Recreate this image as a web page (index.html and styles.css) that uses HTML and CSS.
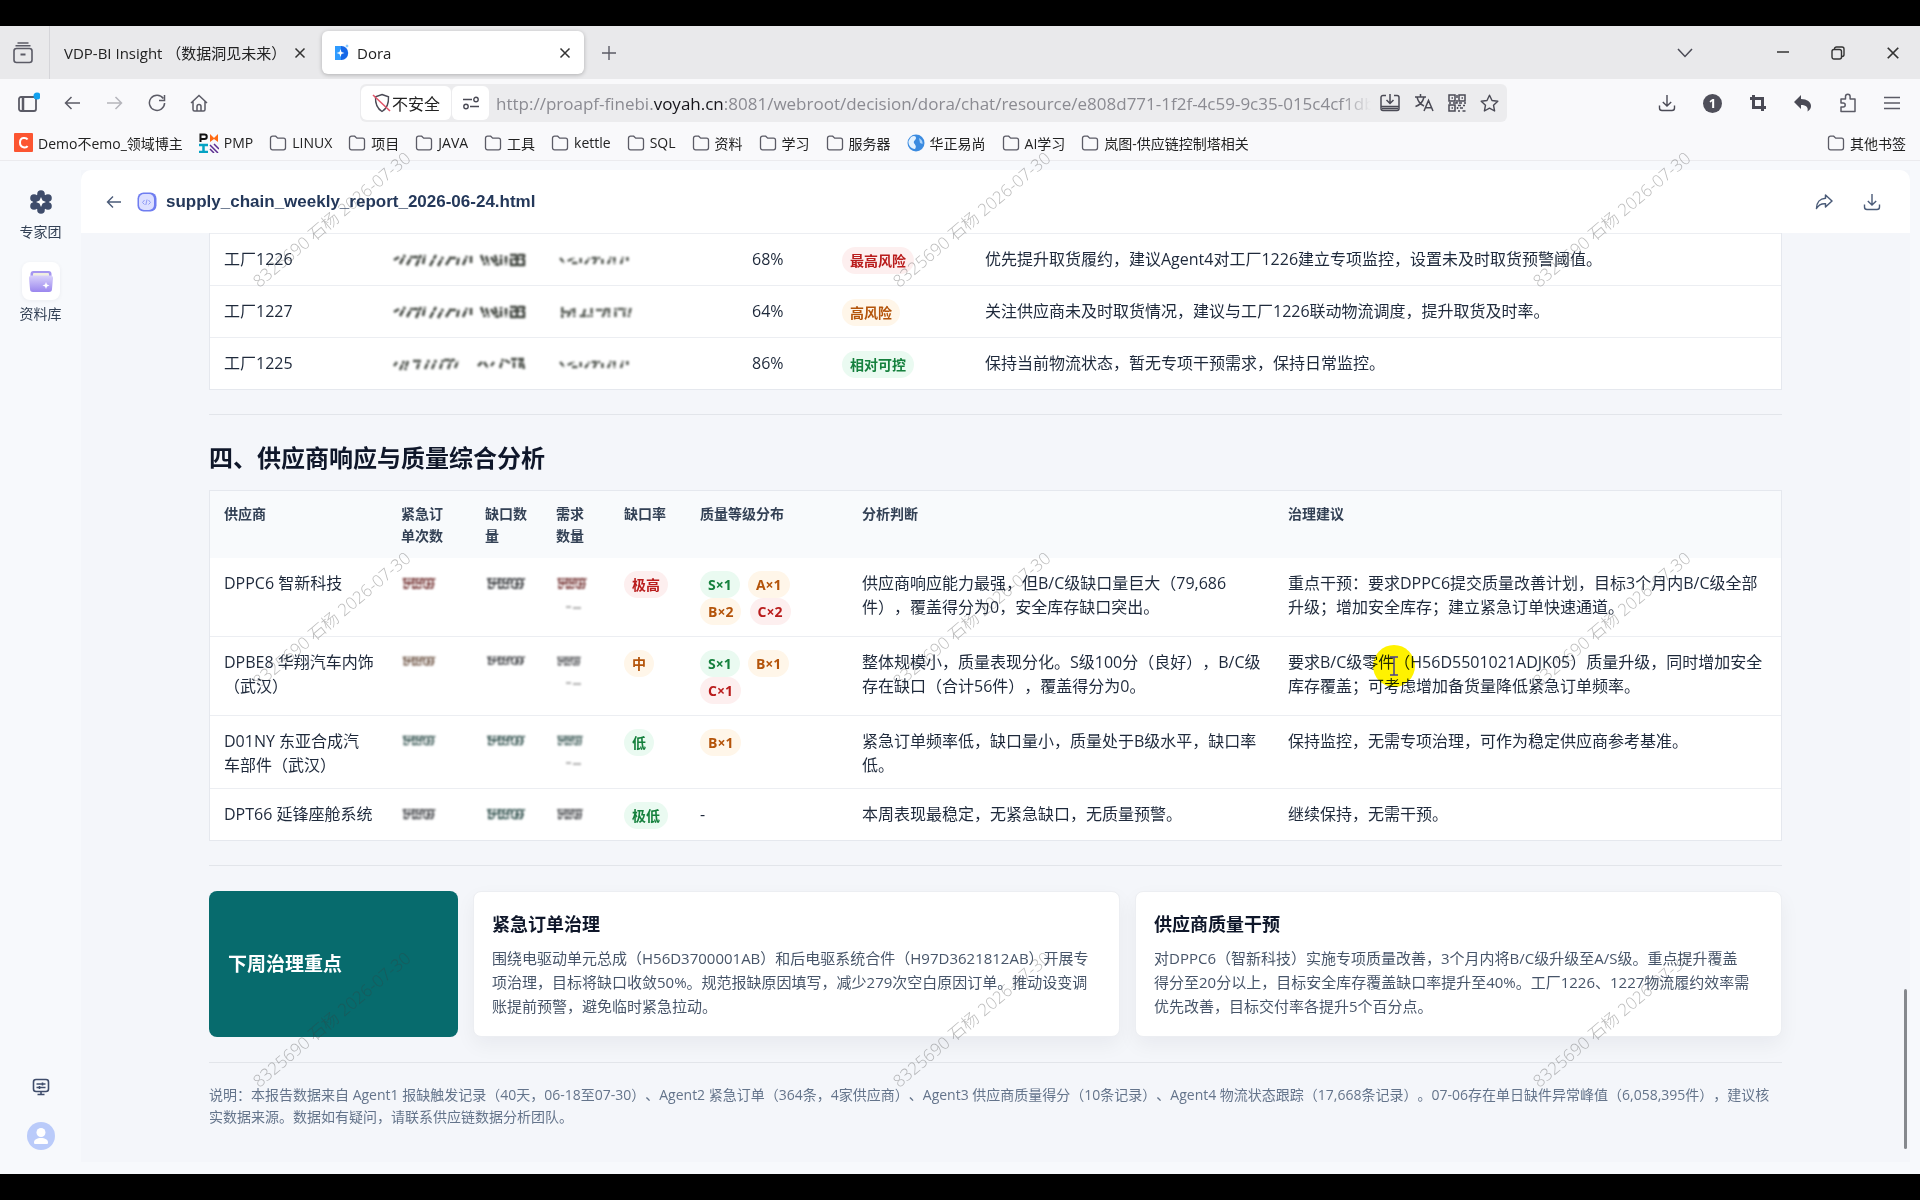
FILE: index.html
```html
<!DOCTYPE html>
<html lang="zh-CN">
<head>
    <meta charset="UTF-8">
    <title>Dora</title>
    <link rel="stylesheet" href="styles.css">
</head>
<body>
<!-- 公用图标 -->
<svg class="defs" width="0" height="0">
    <symbol id="folder" viewBox="0 0 18 18"><path d="M1.5 4.2a2 2 0 0 1 2-2h3.2l2 2h5.8a2 2 0 0 1 2 2v7.6a2 2 0 0 1-2 2h-11a2 2 0 0 1-2-2z" fill="none" stroke="#5b5b66" stroke-width="1.3"/></symbol>
    <symbol id="close" viewBox="0 0 12 12"><path d="M1.5 1.5l9 9M10.5 1.5l-9 9" fill="none" stroke="#333" stroke-width="1.5"/></symbol>
    <symbol id="down" viewBox="0 0 18 18"><path d="M9 1v11M4.800 8L9 12l4.200-4M1.500 11.500v2.500a2.500 2.500 0 0 0 2.500 2.500h10a2.500 2.500 0 0 0 2.500-2.500v-2.500" fill="none" stroke="currentColor" stroke-width="1.4"/></symbol>
    <symbol id="smear-a" viewBox="0 0 136 16" preserveAspectRatio="none"><path d="M1 8l5-3M7 12l5-9M14 13l5-9M20 5h5M23 14l5-11M30 12l2-9M37 14l6-11M45 14l5-9M53 13l5-8M56 6h7M64 13l2-8M70 13l4-9M78 4v8M88 3l4 10M93 4l3 9M98 5l5 8M102 3l3 11M108 13V3M113 4v9M117 3h14M120 7h11M118 13V6M124 14V3M131 14V2M117 13h15" fill="none" stroke="#40453f" stroke-width="2.600" stroke-dasharray="7 1"/></symbol>
    <symbol id="smear-b" viewBox="0 0 136 16" preserveAspectRatio="none"><path d="M1 10l3-4M7 14l4-9M15 5l-3 9M20 5h8M24 13l3-9M32 13l4-9M39 13l4-9M47 13l3-9M51 4h11M55 13l3-8M62 12l3-7M85 10l4-4M91 6l4 6M98 10l3-4M107 12l3-9M112 4l5 3M118 3h14M121 12V3M127 12V3M131 13l-2-9" fill="none" stroke="#4c514b" stroke-width="2.600" stroke-dasharray="6 1"/></symbol>
    <symbol id="smear-c" viewBox="0 0 70 16" preserveAspectRatio="none"><path d="M1 6l4 5M8 9l6-3M12 11h5M20 6v6M24 12l4-6M30 6h8M32 12l3-6M40 12V6M45 12l3-7M51 5v7M57 12l2-7M63 5v4" fill="none" stroke="#555a54" stroke-width="2.400" stroke-dasharray="5 1"/></symbol>
    <symbol id="smear-d" viewBox="0 0 70 16" preserveAspectRatio="none"><path d="M3 3v11M3 8h8M8 13l4-8M14 4v9M19 12h9M24 5l-2 8M30 4v9M34 6h9M40 13l4-9M46 4v9M52 13V4M54 5h8M60 13V5M66 4l-2 9" fill="none" stroke="#5a5f59" stroke-width="2.400" stroke-dasharray="6 1"/></symbol>
    <symbol id="blot" viewBox="0 0 42 16" preserveAspectRatio="none"><path d="M2 3h38M4 7h12M19 7h8M30 8h9M3 12h6M13 12h11M28 12h10M4 3v9M9 5v7M14 3v10M18 3v10M23 4v8M27 3v10M32 3v9M37 3v10" fill="none" stroke="currentColor" stroke-width="1.900" stroke-dasharray="5 1 3 1"/></symbol>
    <symbol id="trail" viewBox="0 0 20 6"><path d="M2 3h5M9 4h8" fill="none" stroke="#999" stroke-width="1.5"/></symbol>
</svg>

<div class="browser">
    <div class="tabs">
        <button class="tab-list" aria-label="标签页列表">
            <svg width="20" height="22" viewBox="0 0 20 22" fill="none" stroke="#5b5b66" stroke-width="1.6"><rect x="1" y="6.500" width="18" height="14" rx="2.500"/><path d="M2.500 3.800h15M4.500 1h11" /><path d="M7.500 12.500h5" stroke-width="2"/></svg>
        </button>
        <div class="tab"><span>VDP-BI Insight （数据洞见未来）</span><button aria-label="关闭"><svg width="12" height="12"><use href="#close"/></svg></button></div>
        <div class="tab active">
            <svg width="15" height="17" viewBox="0 0 15 17"><path d="M1 2h6.500a6.500 6.800 0 0 1 0 14H1z" fill="#1668e8"/><path d="M1 2h6v14H1z" fill="#2f9bff"/><path d="M6.500 5l1 3 3 1-3 1-1 3-1-3-3-1 3-1z" fill="#fff"/><path d="M13 0l.5 1.500 1.500.5-1.500.5-.5 1.500-.5-1.500-1.500-.5 1.500-.5z" fill="#58b4ff"/></svg>
            <span>Dora</span><button aria-label="关闭"><svg width="12" height="12"><use href="#close"/></svg></button>
        </div>
        <button class="new-tab" aria-label="新建标签页"><svg width="16" height="16" viewBox="0 0 16 16"><path d="M8 1v14M1 8h14" stroke="#5b5b66" stroke-width="1.400"/></svg></button>
        <div class="win">
            <button aria-label="列出标签"><svg width="16" height="16" viewBox="0 0 16 16" fill="none" stroke="#4a4a55" stroke-width="1.500"><path d="M1 4l7 7.500L15 4"/></svg></button>
            <button class="min" aria-label="最小化"><svg width="14" height="14" viewBox="0 0 14 14"><path d="M1 6h12" stroke="#333" stroke-width="1.500"/></svg></button>
            <button aria-label="还原"><svg width="14" height="14" viewBox="0 0 14 14" fill="none" stroke="#333" stroke-width="1.400"><rect x="1" y="3.500" width="9.500" height="9.500" rx="2"/><path d="M3.500 3.500V3a2 2 0 0 1 2-2H11a2 2 0 0 1 2 2v5.500a2 2 0 0 1-2 2h-.5"/></svg></button>
            <button aria-label="关闭窗口"><svg width="14" height="14"><use href="#close"/></svg></button>
        </div>
    </div>

    <div class="nav">
        <div class="nav-left">
            <button aria-label="侧栏"><svg width="24" height="22" viewBox="0 0 24 22" fill="none" stroke="#5b5b66" stroke-width="1.800"><rect x="3" y="5" width="17" height="14" rx="2"/><path d="M7 5v14" stroke-width="2.500"/><circle cx="21" cy="4" r="3.500" fill="#12a1ef" stroke="none"/></svg></button>
            <button aria-label="后退"><svg width="18" height="16" viewBox="0 0 18 16" fill="none" stroke="#5b5b66" stroke-width="1.500"><path d="M16 8H1.500M7.500 2L1.500 8l6 6"/></svg></button>
            <button aria-label="前进"><svg width="18" height="16" viewBox="0 0 18 16" fill="none" stroke="#b5b5bb" stroke-width="1.500"><path d="M1 8h14.500M9.500 2l6 6-6 6"/></svg></button>
            <button aria-label="刷新"><svg width="18" height="18" viewBox="0 0 18 18" fill="none" stroke="#5b5b66" stroke-width="1.500"><path d="M15.300 4.500A7.600 7.600 0 1 0 16.600 9M16.500 1v5.500H11"/></svg></button>
            <button aria-label="主页"><svg width="18" height="18" viewBox="0 0 18 18" fill="none" stroke="#5b5b66" stroke-width="1.500"><path d="M1 9l8-7.500L17 9M3 7.500v8A1.500 1.500 0 0 0 4.500 17h9a1.500 1.500 0 0 0 1.500-1.500v-8M7 17v-4.500a2 2 0 0 1 4 0V17"/></svg></button>
        </div>
        <div class="url">
            <span class="chip"><svg width="20" height="20" viewBox="0 0 20 20" fill="none"><path d="M10 1.500l6.500 2.300c.3 6.500-1 11.500-6.500 14.700C4.500 15.300 3.200 10.300 3.500 3.800z" stroke="#4a4a55" stroke-width="1.400"/><path d="M1 2l17 16" stroke="#e2556a" stroke-width="1.600"/></svg>不安全</span>
            <button class="chip perm" aria-label="权限"><svg width="18" height="14" viewBox="0 0 18 14" fill="none" stroke="#4a4a55" stroke-width="1.400"><path d="M1 3.500h9M8 10.500h9"/><circle cx="14" cy="3.500" r="2.200"/><circle cx="4" cy="10.500" r="2.200"/></svg></button>
            <span class="addr">http://proapf-finebi.<b>voyah.cn</b>:8081/webroot/decision/dora/chat/resource/e808d771-1f2f-4c59-9c35-015c4cf1db</span>
            <div class="url-btns">
                <button aria-label="安装"><svg width="20" height="18" viewBox="0 0 20 18" fill="none" stroke="#4a4a55" stroke-width="1.500"><path d="M6 1.500H3a2 2 0 0 0-2 2v11A2 2 0 0 0 3 16.500h14a2 2 0 0 0 2-2v-11a2 2 0 0 0-2-2h-3M10 0v9M6.500 6L10 9.500 13.500 6M1 12.500h18M2 14.500h16"/></svg></button>
                <button aria-label="翻译"><svg width="20" height="18" viewBox="0 0 20 18" fill="none" stroke="#4a4a55" stroke-width="1.500"><path d="M1 3h11M6.500 0v3M3 3c1 4.500 3.500 7.500 7 9M10 3C9 7.500 6 11 1.500 12.500M10 17l4.500-10.500L19 17M11.500 13.800h6"/></svg></button>
                <button aria-label="二维码"><svg width="18" height="18" viewBox="0 0 18 18" fill="none" stroke="#4a4a55" stroke-width="1.500"><rect x="1" y="1" width="6" height="6"/><rect x="11" y="1" width="6" height="6"/><rect x="1" y="11" width="6" height="6"/><path d="M3.500 4h1.500M13.500 4h1.500M3.500 14h1.500M9 1v3M9 6v3H5M1 9h2M11 9h3M16 9h2M10 11.500h3M15 11.500h2M12 14h3M10 17h2M14.500 17h3M9.500 13v2" /></svg></button>
                <button aria-label="收藏"><svg width="19" height="18" viewBox="0 0 19 18" fill="none" stroke="#4a4a55" stroke-width="1.400" stroke-linejoin="round"><path d="M9.500 1.200l2.500 5.300 5.800.7-4.300 4 1.100 5.800-5.100-2.900L4.400 17l1.100-5.800-4.300-4 5.800-.7z"/></svg></button>
            </div>
        </div>
        <div class="nav-right">
            <button aria-label="下载"><svg width="18" height="18"><use href="#down"/></svg></button>
            <button class="count">1</button>
            <button aria-label="截图"><svg width="18" height="18" viewBox="0 0 18 18" fill="none" stroke="#4a4a55" stroke-width="3"><path d="M4.500 1v12.500H17M1 4.500h12.500V17"/></svg></button>
            <button aria-label="撤销"><svg width="18" height="18" viewBox="0 0 18 18" fill="#4a4a55"><path d="M7 1v4c6 0 10 3 10 7 0 2-1 4-3.500 5.500 1-4-1-6.500-6.500-6.500v4L0 8z"/></svg></button>
            <button aria-label="扩展"><svg width="18" height="20" viewBox="0 0 18 20" fill="none" stroke="#5b5b66" stroke-width="1.500"><path d="M2 6h4.500V3.500a2.300 2.300 0 0 1 4.600 0V6H16v12.500H2V14h2.200a2 2 0 0 0 0-4H2z" stroke-linejoin="round"/></svg></button>
            <button aria-label="菜单"><svg width="16" height="14" viewBox="0 0 16 14" stroke="#5b5b66" stroke-width="1.400"><path d="M0 1.500h16M0 7h16M0 12.500h16"/></svg></button>
        </div>
    </div>

    <div class="marks">
        <a href="#"><svg width="19" height="19" viewBox="0 0 19 19"><rect width="19" height="19" rx="1" fill="#fc5531"/><path d="M13.500 6.500C12.500 4.500 6 3.500 6 9.500s6.500 5.500 7.500 3.500" fill="none" stroke="#fff" stroke-width="2"/></svg>Demo不emo_领域博主</a>
        <a href="#"><svg width="20" height="20" viewBox="0 0 20 20" fill="none"><path d="M1.500 9V1.500h4a2 2 0 0 1 0 4.500h-4" stroke="#111" stroke-width="2"/><path d="M11 9V1l4 4 4-4v8l-4-3z" fill="#ff6a13"/><path d="M0 12h9M0 19h9M4.500 12v7" stroke="#05a3c4" stroke-width="2.500"/><path d="M11 12l8 8M15 11l5 5M11 16l4 4" stroke="#5b2d90" stroke-width="1.500"/></svg>PMP</a>
        <a href="#"><svg width="18" height="18"><use href="#folder"/></svg>LINUX</a>
        <a href="#"><svg width="18" height="18"><use href="#folder"/></svg>项目</a>
        <a href="#"><svg width="18" height="18"><use href="#folder"/></svg>JAVA</a>
        <a href="#"><svg width="18" height="18"><use href="#folder"/></svg>工具</a>
        <a href="#"><svg width="18" height="18"><use href="#folder"/></svg>kettle</a>
        <a href="#"><svg width="18" height="18"><use href="#folder"/></svg>SQL</a>
        <a href="#"><svg width="18" height="18"><use href="#folder"/></svg>资料</a>
        <a href="#"><svg width="18" height="18"><use href="#folder"/></svg>学习</a>
        <a href="#"><svg width="18" height="18"><use href="#folder"/></svg>服务器</a>
        <a href="#"><svg width="18" height="18" viewBox="0 0 18 18"><circle cx="9" cy="9" r="8.500" fill="#3b8be0"/><path d="M4 3c3-2 5-1 5 1s-3 3-2 5 3 3 1 6c-4 0-7-4-6.500-8z" fill="#e4f2ff"/><path d="M12 4c2 1 4 3 3.500 6L13 9z" fill="#a8d2fa"/></svg>华正易尚</a>
        <a href="#"><svg width="18" height="18"><use href="#folder"/></svg>AI学习</a>
        <a href="#"><svg width="18" height="18"><use href="#folder"/></svg>岚图-供应链控制塔相关</a>
        <a href="#" class="other"><svg width="18" height="18"><use href="#folder"/></svg>其他书签</a>
    </div>

    <div class="app">
        <div class="side">
            <a href="#"><svg width="24" height="24" viewBox="0 0 24 24"><g fill="#3f4d6b"><circle cx="12" cy="12" r="8"/><circle cx="12" cy="4" r="3.800"/><circle cx="12" cy="20" r="3.800"/><circle cx="5" cy="8" r="3.800"/><circle cx="19" cy="8" r="3.800"/><circle cx="5" cy="16" r="3.800"/><circle cx="19" cy="16" r="3.800"/></g><path d="M12 7l1.500 3.500L17 12l-3.500 1.500L12 17l-1.500-3.500L7 12l3.500-1.500z" fill="#fff"/></svg>专家团</a>
            <a href="#"><span class="lib"><svg width="24" height="22" viewBox="0 0 24 22"><defs><linearGradient id="lg" x1="0" y1="0" x2="0" y2="1"><stop offset="0" stop-color="#d9d2fb"/><stop offset="1" stop-color="#9a86ee"/></linearGradient></defs><rect x="1.500" y="1" width="21" height="16" rx="3" fill="#a596f0"/><rect x="4" y="3" width="16" height="8" rx="1" fill="#f0eee0"/><path d="M0 8a2.500 2.500 0 0 1 2.500-2.500h19A2.500 2.500 0 0 1 24 8l-1 11a3 3 0 0 1-3 3H4a3 3 0 0 1-3-3z" fill="url(#lg)"/><path d="M17 12l1 2.500 2.500 1-2.500 1-1 2.500-1-2.500-2.500-1 2.500-1z" fill="#fff"/></svg></span>资料库</a>
            <button class="screen" aria-label="控制台"><svg width="18" height="18" viewBox="0 0 18 18" fill="none" stroke="#3f4d6b" stroke-width="1.600"><rect x="1.500" y="1.500" width="15" height="12" rx="2.500"/><path d="M4.500 6h9M4.500 9.500h9M5.500 16.500h7M9 13.500v3" /><path d="M10.500 4.500v3M7.500 8v3"/></svg></button>
            <button aria-label="用户"><svg width="28" height="28" viewBox="0 0 28 28"><circle cx="14" cy="14" r="14" fill="#bacbfa"/><circle cx="14" cy="10.500" r="4.500" fill="#fff"/><path d="M7 20.500c0-3 3-4.500 7-4.500s7 1.500 7 4.500c0 1-.5 1.500-1.500 1.500h-11C7.500 22 7 21.500 7 20.500z" fill="#fff"/></svg></button>
        </div>

        <div class="main">
            <div class="head">
                <button aria-label="返回"><svg width="16" height="14" viewBox="0 0 16 14" fill="none" stroke="#4a5b78" stroke-width="1.400"><path d="M15 7H1.500M7 1.500L1.500 7 7 12.500"/></svg></button>
                <svg width="20" height="20" viewBox="0 0 20 20"><rect x=".5" y=".5" width="19" height="19" rx="6" fill="#6f7df0"/><rect x="2" y="2" width="15" height="16" rx="5" fill="#dcdfff"/><path d="M7.500 8l-2 2.500 2 2M11.500 8l2 2.500-2 2M10 7.500l-1.200 5.500" fill="none" stroke="#8f9af5"/></svg>
                <h1>supply_chain_weekly_report_2026-06-24.html</h1>
                <div class="acts">
                    <button aria-label="分享"><svg width="18" height="16" viewBox="0 0 18 16" fill="none" stroke="#4a5b78" stroke-width="1.500" stroke-linejoin="round"><path d="M10.500 1L17 7l-6.500 6V9.800C6.500 9.500 3.500 11 1.500 14.500 1.500 8.500 5 4.500 10.500 4.200z"/></svg></button>
                    <button aria-label="下载"><svg width="18" height="18"><use href="#down"/></svg></button>
                </div>
            </div>

            <div class="report">
                <table class="factory">
                    <colgroup><col class="f1"><col class="f2"><col class="f3"><col class="f4"><col class="f5"><col></colgroup>
                    <tbody>
                    <tr><td>工厂1226</td><td><svg class="smear" width="136" height="16"><use href="#smear-a"/></svg></td><td><svg class="smear" width="76" height="16"><use href="#smear-c"/></svg></td><td>68%</td><td><span class="badge red">最高风险</span></td><td>优先提升取货履约，建议Agent4对工厂1226建立专项监控，设置未及时取货预警阈值。</td></tr>
                    <tr><td>工厂1227</td><td><svg class="smear" width="136" height="16"><use href="#smear-a"/></svg></td><td><svg class="smear" width="76" height="16"><use href="#smear-d"/></svg></td><td>64%</td><td><span class="badge orange">高风险</span></td><td>关注供应商未及时取货情况，建议与工厂1226联动物流调度，提升取货及时率。</td></tr>
                    <tr><td>工厂1225</td><td><svg class="smear" width="136" height="16"><use href="#smear-b"/></svg></td><td><svg class="smear" width="76" height="16"><use href="#smear-c"/></svg></td><td>86%</td><td><span class="badge green">相对可控</span></td><td>保持当前物流状态，暂无专项干预需求，保持日常监控。</td></tr>
                    </tbody>
                </table>

                <hr>
                <h2>四、供应商响应与质量综合分析</h2>

                <table class="supplier">
                    <colgroup><col class="s1"><col class="s2"><col class="s3"><col class="s4"><col class="s5"><col class="s6"><col class="s7"><col></colgroup>
                    <thead>
                    <tr><th>供应商</th><th>紧急订<br>单次数</th><th>缺口数量</th><th>需求数量</th><th>缺口率</th><th>质量等级分布</th><th>分析判断</th><th>治理建议</th></tr>
                    </thead>
                    <tbody>
                    <tr>
                        <td>DPPC6 智新科技</td>
                        <td><svg class="blot rust" width="36" height="16"><use href="#blot"/></svg></td>
                        <td><svg class="blot" width="42" height="16"><use href="#blot"/></svg></td>
                        <td><svg class="blot rust" width="32" height="16"><use href="#blot"/></svg><svg class="trail" width="20" height="6"><use href="#trail"/></svg></td>
                        <td><span class="badge red">极高</span></td>
                        <td class="levels"><span class="badge green">S×1</span> <span class="badge orange">A×1</span> <span class="badge orange">B×2</span> <span class="badge red">C×2</span></td>
                        <td>供应商响应能力最强，但B/C级缺口量巨大（79,686件），覆盖得分为0，安全库存缺口突出。</td>
                        <td>重点干预：要求DPPC6提交质量改善计划，目标3个月内B/C级全部升级；增加安全库存；建立紧急订单快速通道。</td>
                    </tr>
                    <tr>
                        <td>DPBE8 华翔汽车内饰（武汉）</td>
                        <td><svg class="blot brown" width="36" height="13"><use href="#blot"/></svg></td>
                        <td><svg class="blot" width="42" height="12"><use href="#blot"/></svg></td>
                        <td><svg class="blot" width="26" height="13"><use href="#blot"/></svg><svg class="trail" width="20" height="6"><use href="#trail"/></svg></td>
                        <td><span class="badge orange">中</span></td>
                        <td class="levels"><span class="badge green">S×1</span> <span class="badge orange">B×1</span> <span class="badge red">C×1</span></td>
                        <td>整体规模小，质量表现分化。S级100分（良好），B/C级存在缺口（合计56件），覆盖得分为0。</td>
                        <td>要求B/C级<span class="hit">零件<span class="cursor"><svg width="10" height="20" viewBox="0 0 10 20" fill="none" stroke="#4a3f8c" stroke-width="1.500"><path d="M1 1h8M1 19h8M5 1v18"/></svg></span></span>（H56D5501021ADJK05）质量升级，同时增加安全库存覆盖；可考虑增加备货量降低紧急订单频率。</td>
                    </tr>
                    <tr>
                        <td>D01NY 东亚合成汽车部件（武汉）</td>
                        <td><svg class="blot teal" width="36" height="14"><use href="#blot"/></svg></td>
                        <td><svg class="blot teal" width="42" height="14"><use href="#blot"/></svg></td>
                        <td><svg class="blot teal" width="28" height="14"><use href="#blot"/></svg><svg class="trail" width="20" height="6"><use href="#trail"/></svg></td>
                        <td><span class="badge green">低</span></td>
                        <td class="levels"><span class="badge orange">B×1</span></td>
                        <td>紧急订单频率低，缺口量小，质量处于B级水平，缺口率低。</td>
                        <td>保持监控，无需专项治理，可作为稳定供应商参考基准。</td>
                    </tr>
                    <tr>
                        <td>DPT66 延锋座舱系统</td>
                        <td><svg class="blot" width="36" height="15"><use href="#blot"/></svg></td>
                        <td><svg class="blot teal" width="42" height="15"><use href="#blot"/></svg></td>
                        <td><svg class="blot" width="28" height="15"><use href="#blot"/></svg></td>
                        <td><span class="badge green">极低</span></td>
                        <td>-</td>
                        <td>本周表现最稳定，无紧急缺口，无质量预警。</td>
                        <td>继续保持，无需干预。</td>
                    </tr>
                    </tbody>
                </table>

                <hr>
                <div class="focus">
                    <div class="lead">下周治理重点</div>
                    <div class="card">
                        <h3>紧急订单治理</h3>
                        <p>围绕电驱动单元总成（H56D3700001AB）和后电驱系统合件（H97D3621812AB）开展专项治理，目标将缺口收敛50%。规范报缺原因填写，减少279次空白原因订单。推动设变调账提前预警，避免临时紧急拉动。</p>
                    </div>
                    <div class="card">
                        <h3>供应商质量干预</h3>
                        <p>对DPPC6（智新科技）实施专项质量改善，3个月内将B/C级升级至A/S级。重点提升覆盖<br>得分至20分以上，目标安全库存覆盖缺口率提升至40%。工厂1226、1227物流履约效率需<br>优先改善，目标交付率各提升5个百分点。</p>
                    </div>
                </div>
                <div class="note">说明：本报告数据来自 Agent1 报缺触发记录（40天，06-18至07-30）、Agent2 紧急订单（364条，4家供应商）、Agent3 供应商质量得分（10条记录）、Agent4 物流状态跟踪（17,668条记录）。07-06存在单日缺件异常峰值（6,058,395件），建议核实数据来源。数据如有疑问，请联系供应链数据分析团队。</div>
                <div class="thumb"></div>
            </div>
        </div>
    </div>

    <!-- 水印 -->
    <div class="water">
        <span>8325690 石杨 2026-07-30</span><span>8325690 石杨 2026-07-30</span><span>8325690 石杨 2026-07-30</span>
        <span>8325690 石杨 2026-07-30</span><span>8325690 石杨 2026-07-30</span><span>8325690 石杨 2026-07-30</span>
        <span>8325690 石杨 2026-07-30</span><span>8325690 石杨 2026-07-30</span><span>8325690 石杨 2026-07-30</span>
    </div>
</div>
</body>
</html>
```
FILE: styles.css
```css
*{
    margin: 0;
    padding: 0;
    box-sizing: border-box;
}
body{
    height: 100vh;
    padding: 26px 0;
    background: #000;
    overflow: hidden;
    font-family: "Open Sans","Noto Sans CJK SC",sans-serif;
    color: #1e293b;
    text-spacing-trim: space-all;
}
button{
    border: none;
    background: none;
    font: inherit;
    color: inherit;
    display: flex;
    align-items: center;
    justify-content: center;
}
a{
    color: inherit;
    text-decoration: none;
}
svg{
    flex-shrink: 0;
}
.defs{
    position: absolute;
}
.browser{
    height: 100%;
    display: flex;
    flex-direction: column;
    background: #f9f9fb;
}
/*标签栏*/
.tabs{
    height: 53px;
    display: flex;
    align-items: center;
    background: #e9e9eb;
    font-size: 15px;
    color: #222;
}
.tab-list{
    width: 50px;
    height: 100%;
    padding-right: 4px;
    border-right: 1px solid #d5d5d9;
}
.tab{
    width: 262px;
    height: 43px;
    padding: 0 8px 0 14px;
    margin-right: 10px;
    display: flex;
    align-items: center;
    gap: 8px;
    border-radius: 6px;
    white-space: nowrap;
}
.tab.active{
    padding: 0 13px 0 12px;
    margin-right: 17px;
    background: #fff;
    box-shadow: 0 1px 4px rgba(0,0,0,.25);
}
.tab button{
    margin-left: auto;
}
.win{
    margin-left: auto;
    padding-right: 20px;
    display: flex;
    gap: 41px;
}
.win .min{
    margin-left: 42px;
}
/*地址栏*/
.nav{
    height: 48px;
    display: flex;
    align-items: center;
    padding: 0 20px 0 16px;
}
.nav-left{
    width: 344px;
    display: flex;
    gap: 24px;
}
.url{
    flex: 1;
    min-width: 0;
    height: 38px;
    padding: 0 8px 0 1px;
    display: flex;
    align-items: center;
    gap: 1px;
    border-radius: 6px;
    background: #ececee;
}
.chip{
    width: 90px;
    height: 34px;
    display: flex;
    align-items: center;
    justify-content: center;
    border-radius: 6px;
    background: #fff;
    font-size: 16px;
    color: #222;
    white-space: nowrap;
}
.perm{
    width: 37px;
}
.addr{
    flex: 1;
    min-width: 0;
    margin-left: 6px;
    overflow: hidden;
    white-space: nowrap;
    font-size: 17px;
    color: #8b8b92;
    -webkit-mask-image: linear-gradient(to left, transparent, #000 30px);
    mask-image: linear-gradient(to left, transparent, #000 30px);
}
.addr b{
    font-weight: normal;
    color: #15141a;
}
.url-btns{
    padding-left: 8px;
    display: flex;
    gap: 14px;
}
.nav-right{
    margin-left: 151px;
    display: flex;
    align-items: center;
    gap: 27px;
    color: #4a4a55;
}
.count{
    width: 19px;
    height: 19px;
    border-radius: 50%;
    background: #4f4f5a;
    color: #fff;
    font-size: 13px;
    font-weight: bold;
}
/*书签栏*/
.marks{
    height: 34px;
    padding: 0 14px 2px;
    display: flex;
    align-items: center;
    gap: 16px;
    border-bottom: 1px solid #ebebee;
    font-size: 14px;
    color: #222;
    white-space: nowrap;
}
.marks a{
    display: flex;
    align-items: center;
    gap: 5px;
}
.marks .other{
    margin-left: auto;
}
/*应用*/
.app{
    flex: 1;
    min-height: 0;
    display: flex;
    padding: 9px 10px 12px 0;
    background: #f7f9fc;
}
.side{
    width: 81px;
    padding: 20px 0 12px;
    display: flex;
    flex-direction: column;
    align-items: center;
    font-size: 14px;
    line-height: 20px;
    color: #334155;
}
.side a{
    display: flex;
    flex-direction: column;
    align-items: center;
    gap: 8px;
    margin-bottom: 20px;
}
.side a + a{
    gap: 4px;
}
.lib{
    width: 38px;
    height: 38px;
    display: flex;
    align-items: center;
    justify-content: center;
    border-radius: 8px;
    background: #fff;
    box-shadow: 0 1px 4px rgba(30,41,59,.06);
}
.screen{
    margin: auto 0 26px;
}
.main{
    flex: 1;
    min-width: 0;
    display: flex;
    flex-direction: column;
    background: #f4f6fa;
}
.head{
    height: 63px;
    padding: 0 29px 0 25px;
    display: flex;
    align-items: center;
    background: #fff;
    border-radius: 10px 10px 0 0;
}
.head > svg{
    margin: 0 9px 0 15px;
}
.head h1{
    font: bold 17px "Liberation Sans",sans-serif;
    color: #24385a;
}
.acts{
    margin-left: auto;
    display: flex;
    gap: 30px;
    color: #4a5b78;
}
.report{
    position: relative;
    flex: 1;
    min-height: 0;
    padding: 0 128px;
    overflow: hidden;
    font-size: 16px;
    line-height: 24px;
}
table{
    width: 100%;
    table-layout: fixed;
    border: 1px solid #e5e8ee;
    border-spacing: 0;
    background: #fff;
}
td,th{
    padding: 12px 14px 11px;
    vertical-align: top;
    text-align: left;
}
td{
    padding: 13px 12px 11px 14px;
    border-top: 1px solid #eceef2;
}
th{
    background: #f8fafc;
    font-size: 14px;
    line-height: 22px;
    color: #334155;
}
.factory{
    border-top: none;
}
.supplier tbody tr:first-child td{
    border-top: none;
}
.f1{width: 169px;}
.f2{width: 166px;}
.f3{width: 193px;}
.f4{width: 90px;}
.f5{width: 143px;}
.s1{width: 177px;}
.s2{width: 84px;}
.s3{width: 71px;}
.s4{width: 68px;}
.s5{width: 76px;}
.s6{width: 162px;}
.s7{width: 426px;}
.smear,.blot,.trail{
    display: block;
    filter: blur(1px);
}
.smear,.blot{
    margin-top: 5px;
}
.blot{
    color: #4a4c50;
}
.blot.rust{
    color: #7d4040;
}
.blot.brown{
    color: #6d5343;
}
.blot.teal{
    color: #3d5b58;
}
.trail{
    margin: 12px 0 0 8px;
}
.badge{
    display: inline-block;
    padding: 3px 8px;
    border-radius: 14px;
    font-size: 14px;
    line-height: 21px;
    font-weight: bold;
}
.levels .badge{
    margin-right: 4px;
}
.red{
    background: #fdefef;
    color: #b91c1c;
}
.orange{
    background: #fff6e9;
    color: #b4540a;
}
.green{
    background: #eafaf1;
    color: #15803d;
}
hr{
    border: none;
    border-top: 1px solid #e2e5ea;
    margin: 24px 0 25px;
}
h2{
    margin-bottom: 14px;
    font-size: 24px;
    line-height: 36px;
    color: #0f172a;
}
.focus{
    display: grid;
    grid-template-columns: 249px 1fr 1fr;
    gap: 15px;
}
.lead{
    padding: 0 19px;
    display: flex;
    align-items: center;
    border-radius: 8px;
    background: #076b6d;
    color: #fff;
    font-size: 19px;
    font-weight: bold;
}
.card{
    padding: 18px;
    border: 1px solid #eceef2;
    border-radius: 8px;
    background: #fff;
    box-shadow: 0 8px 20px rgba(15,23,42,.05);
}
.card h3{
    margin-bottom: 8px;
    font-size: 18px;
    line-height: 28px;
    color: #0f172a;
}
.card p{
    font-size: 15px;
    color: #475569;
}
.note{
    margin-top: 25px;
    padding-top: 21px;
    border-top: 1px solid #e2e5ea;
    font-size: 14px;
    line-height: 22px;
    color: #64748b;
}
/*滚动条*/
.thumb{
    position: absolute;
    right: 3px;
    bottom: 13px;
    width: 3px;
    height: 160px;
    border-radius: 2px;
    background: #85888d;
}
/*鼠标*/
.hit{
    position: relative;
}
.cursor{
    position: absolute;
    top: -6px;
    right: -21px;
    width: 42px;
    height: 42px;
    display: flex;
    align-items: center;
    justify-content: center;
    border-radius: 50%;
    background: #fff200;
    mix-blend-mode: multiply;
}
.water{
    position: absolute;
    top: 18px;
    left: 11px;
    right: 0;
    bottom: 0;
    display: grid;
    grid-template-columns: repeat(3,640px);
    grid-auto-rows: 400px;
    place-items: center;
    overflow: hidden;
    pointer-events: none;
    font-size: 17px;
    font-weight: 300;
    color: rgba(60,60,60,.35);
}
.water span{
    transform: rotate(-40deg);
    white-space: nowrap;
}
```
